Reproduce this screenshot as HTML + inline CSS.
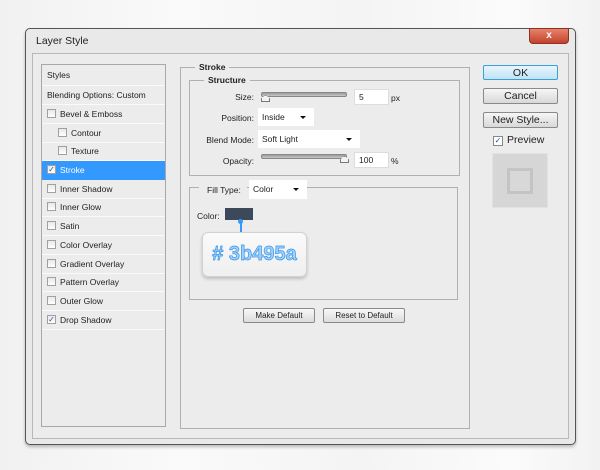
<!DOCTYPE html>
<html><head><style>
*{margin:0;padding:0;box-sizing:border-box}
body{width:600px;height:470px;overflow:hidden;background:linear-gradient(90deg,#f1f1f1,#fafafa 30%,#f4f4f4 60%,#fbfbfb 85%,#f2f2f2);font-family:"Liberation Sans",sans-serif;font-size:8.5px;color:#222;position:relative}
.a{position:absolute}
.dlg{left:25px;top:28px;width:551px;height:417px;border:1px solid #555;border-radius:5px;background:#e9e9e9;box-shadow:0 2px 3px rgba(0,0,0,.25)}
.inner{left:32px;top:53px;width:537px;height:386px;border:1px solid #b8b8b8;background:#ececec}
.list{left:41px;top:64px;width:125px;height:363px;border:1px solid #a8a8a8;background:#ececec}
.row{position:absolute;left:0;width:123px;border-bottom:1px solid #fafafa;height:19px;line-height:18px}
.cb{position:absolute;width:9px;height:9px;border:1px solid #a0a0a0;background:linear-gradient(#e8e8e8,#fff);top:4px;font-size:8px;line-height:7px;text-align:center;color:#2a50a0}
.grp{border:1px solid #b0b0b0}
.lg{position:absolute;background:#ececec;font-weight:bold;padding:0 4px;line-height:10px}
.inp{background:#fff;border:1px solid #ddd;height:16px;line-height:15px;padding-left:4px}
.sel{background:#fff;height:18px;line-height:18px;padding-left:4px}
.sel:after{content:"";position:absolute;right:8px;top:8px;border:3px solid transparent;border-top:3px solid #111}
.btn{border:1px solid #8a8a8a;border-radius:2px;background:linear-gradient(#f7f7f7,#dcdcdc);text-align:center;line-height:13px;font-size:8px}
.rb{border:1px solid #8a8a8a;border-radius:2px;background:linear-gradient(#f6f6f6,#d8d8d8);text-align:center;font-size:10.5px;line-height:14px}
.slider{height:5px;border:1px solid #888;border-radius:2px;background:linear-gradient(#9a9a9a,#c8c8c8)}
.thumb{width:9px;height:7px;border:1px solid #777;background:#f3f3f3;clip-path:polygon(50% 0,100% 50%,100% 100%,0 100%,0 50%)}
</style></head><body>
<div class="a dlg"></div>
<div class="a" style="left:36px;top:35px;font-size:10.5px;color:#222">Layer Style</div>
<div class="a" style="left:529px;top:28px;width:40px;height:16px;border-radius:0 0 4px 4px;background:linear-gradient(#e7836d,#c4422a);border:1px solid #8b3322;color:#fff;text-align:center;font-size:10px;font-weight:bold;line-height:14px">x</div>
<div class="a inner"></div>
<div class="a list">
<div class="row" style="top:0;height:21px;line-height:20px;padding-left:5px">Styles</div>
<div class="row" style="top:21px;padding-left:5px">Blending Options: Custom</div>
<div class="row" style="top:40px"><span class="cb" style="left:5px"></span><span style="padding-left:18px">Bevel &amp; Emboss</span></div>
<div class="row" style="top:59px"><span class="cb" style="left:16px"></span><span style="padding-left:29px">Contour</span></div>
<div class="row" style="top:77px"><span class="cb" style="left:16px"></span><span style="padding-left:29px">Texture</span></div>
<div class="row" style="top:96px;background:#3399ff;color:#fff;border-color:#3399ff"><span class="cb" style="left:5px">✓</span><span style="padding-left:18px">Stroke</span></div>
<div class="row" style="top:115px"><span class="cb" style="left:5px"></span><span style="padding-left:18px">Inner Shadow</span></div>
<div class="row" style="top:133px"><span class="cb" style="left:5px"></span><span style="padding-left:18px">Inner Glow</span></div>
<div class="row" style="top:152px"><span class="cb" style="left:5px"></span><span style="padding-left:18px">Satin</span></div>
<div class="row" style="top:171px"><span class="cb" style="left:5px"></span><span style="padding-left:18px">Color Overlay</span></div>
<div class="row" style="top:190px"><span class="cb" style="left:5px"></span><span style="padding-left:18px">Gradient Overlay</span></div>
<div class="row" style="top:208px"><span class="cb" style="left:5px"></span><span style="padding-left:18px">Pattern Overlay</span></div>
<div class="row" style="top:227px"><span class="cb" style="left:5px"></span><span style="padding-left:18px">Outer Glow</span></div>
<div class="row" style="top:246px"><span class="cb" style="left:5px">✓</span><span style="padding-left:18px">Drop Shadow</span></div>
</div>

<div class="a grp" style="left:180px;top:67px;width:290px;height:362px"></div>
<div class="lg" style="left:195px;top:62px">Stroke</div>
<div class="a grp" style="left:189px;top:80px;width:271px;height:96px"></div>
<div class="lg" style="left:204px;top:75px">Structure</div>

<div class="a" style="left:200px;top:91px;width:54px;text-align:right;line-height:12px">Size:</div>
<div class="a slider" style="left:261px;top:92px;width:86px"></div>
<div class="a thumb" style="left:261px;top:95px"></div>
<div class="a inp" style="left:354px;top:89px;width:35px">5</div>
<div class="a" style="left:391px;top:93px">px</div>

<div class="a" style="left:200px;top:113px;width:54px;text-align:right">Position:</div>
<div class="a sel" style="left:258px;top:108px;width:56px">Inside</div>
<div class="a" style="left:190px;top:135px;width:64px;text-align:right">Blend Mode:</div>
<div class="a sel" style="left:258px;top:130px;width:102px">Soft Light</div>
<div class="a" style="left:200px;top:156px;width:54px;text-align:right">Opacity:</div>
<div class="a slider" style="left:261px;top:154px;width:86px"></div>
<div class="a thumb" style="left:340px;top:156px"></div>
<div class="a inp" style="left:354px;top:152px;width:35px">100</div>
<div class="a" style="left:391px;top:156px">%</div>

<div class="a grp" style="left:189px;top:187px;width:269px;height:113px"></div>
<div class="a" style="left:199px;top:181px;width:48px;height:15px;background:#ececec"></div>
<div class="a" style="left:207px;top:185px">Fill Type:</div>
<div class="a sel" style="left:249px;top:180px;width:58px;height:19px">Color</div>
<div class="a" style="left:197px;top:211px">Color:</div>
<div class="a" style="left:225px;top:208px;width:28px;height:12px;background:#3b495a"></div>
<div class="a" style="left:238px;top:219px;width:5px;height:5px;border-radius:50%;background:#3399ff"></div>
<div class="a" style="left:240px;top:222px;width:1.5px;height:11px;background:#3399ff"></div>
<div class="a" style="left:202px;top:232px;width:105px;height:45px;border-radius:6px;background:linear-gradient(#fafafa,#efefef);border:1px solid #d2d2d2;box-shadow:0 2px 3px rgba(0,0,0,.2);text-align:center;line-height:43px;font-size:20px;font-weight:bold;color:#9fd0fa;-webkit-text-stroke:0.7px #3a95e8">#&nbsp;3b495a</div>

<div class="a btn" style="left:243px;top:308px;width:72px;height:15px">Make Default</div>
<div class="a btn" style="left:323px;top:308px;width:82px;height:15px">Reset to Default</div>

<div class="a rb" style="left:483px;top:65px;width:75px;height:15px;border-color:#3b9fd8;background:linear-gradient(#e8f6fd,#bfe3f5)">OK</div>
<div class="a rb" style="left:483px;top:88px;width:75px;height:16px">Cancel</div>
<div class="a rb" style="left:483px;top:112px;width:75px;height:16px">New Style...</div>
<div class="a cb" style="left:493px;top:136px;width:10px;height:10px;background:#fff;border-color:#888">✓</div>
<div class="a" style="left:507px;top:134px;font-size:10.5px">Preview</div>
<div class="a" style="left:492px;top:153px;width:56px;height:55px;background:#d6d6d6;border:1px solid #e2e2e2"></div>
<div class="a" style="left:507px;top:168px;width:26px;height:26px;border:3px solid #c4c4c4;background:#d8d8d8"></div>
</body></html>
